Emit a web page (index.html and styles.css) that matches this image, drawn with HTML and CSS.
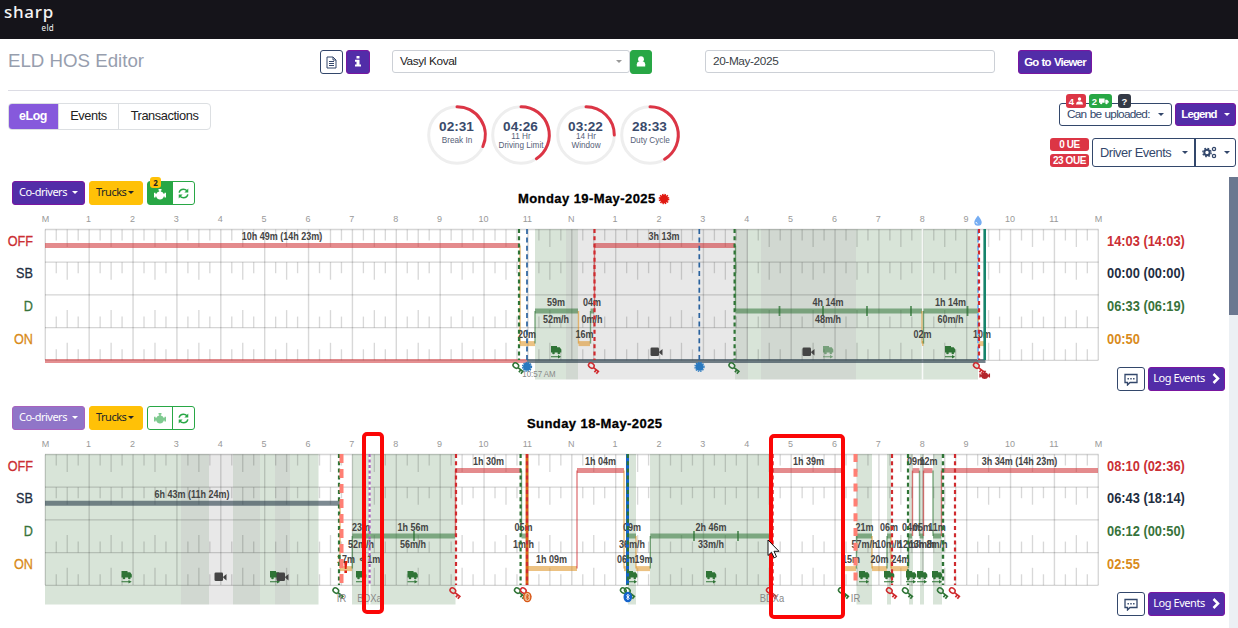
FILE: index.html
```html
<!DOCTYPE html>
<html lang="en">
<head>
<meta charset="utf-8">
<title>ELD HOS Editor</title>
<link rel="stylesheet" href="styles.css">
</head>
<body>
<svg class="defs" width="0" height="0">
  <symbol id="engine" viewBox="0 0 12 11"><path d="M4.500 0h3v1.500H6.800v.9Q9 2.600 9.600 4.800h.9V3.800h1.500v4.700h-1.500V7.500h-.7Q9 10.500 6 10.500T2.200 7.500h-.7v1H0V3.800h1.500v1h.9Q3 2.600 5.200 2.400v-.9h-.7z"/></symbol>
  <symbol id="refresh" viewBox="0 0 12 12"><path d="M1.300 5C1.800 2.600 3.700 1.300 6 1.300c1.500 0 2.800.6 3.700 1.600M10.700 7c-.5 2.400-2.400 3.700-4.700 3.700-1.500 0-2.800-.6-3.700-1.600" fill="none" stroke="currentColor" stroke-width="1.700"/><path d="M11.200.6v4.200H7zM.8 11.400V7.200H5z"/></symbol>
  <symbol id="chat" viewBox="0 0 14 13"><path d="M1 1.500h12v8H6L3.500 12V9.500H1z" fill="none" stroke="currentColor" stroke-width="1.300"/><path d="M3.500 5h1.400v1.400H3.500zM6.300 5h1.400v1.400H6.300zM9.100 5h1.400v1.400H9.100z"/></symbol>
  <symbol id="chevron" viewBox="0 0 8 11"><path d="M1.500 1l4.500 4.500L1.500 10" fill="none" stroke="currentColor" stroke-width="2.500"/></symbol>
  <symbol id="van" viewBox="0 0 16 10"><path d="M0 0h9v7H0zM10 2h3l2.500 2.500V7H10z"/><circle cx="3.500" cy="7.700" r="1.800"/><circle cx="12" cy="7.700" r="1.800"/></symbol>
</svg>

<header class="topbar"><div class="brand">sharp<span>eld</span></div></header>

<section class="filters">
  <h1>ELD HOS Editor</h1>
  <div class="doc-actions">
    <button class="btn outline doc"><svg width="11" height="13" viewBox="0 0 11 13"><path d="M1 1h6l3 3v8H1zM7 1v3h3M3 5.500h5M3 7.500h5M3 9.500h5" fill="none" stroke="currentColor"/></svg></button>
    <button class="btn primary info"><svg width="8" height="11" viewBox="0 0 8 11"><path d="M2.500 0h3v2.500h-3zM1 3.800h4.500v4.700H7v2H1v-2h1.500V5.800H1z" fill="#fff"/></svg></button>
  </div>
  <div class="driver">
    <div class="field">Vasyl Koval<i class="caret"></i></div>
    <button class="btn success user"><svg width="10" height="12" viewBox="0 0 10 12"><circle cx="5" cy="3.200" r="2.900" fill="#fff"/><path d="M.8 10.500V8.300Q1 5.500 3 5.500h4q2 0 2.200 2.800v2.200z" fill="#fff"/></svg></button>
  </div>
  <div class="field date">20-May-2025</div>
  <button class="btn primary viewer">Go to Viewer</button>
</section>

<section class="summary">
  <nav class="tabs"><a class="active">eLog</a><a>Events</a><a>Transactions</a></nav>
  <svg class="gauges" id="gauges" width="260" height="64" viewBox="425 103 260 64"></svg>
  <div class="actions">
    <div class="line">
      <div class="upload">Can be uploaded:<i class="caret"></i>
        <div class="badges"><b class="red">4 <svg width="7" height="8" viewBox="0 0 7 8"><circle cx="3.500" cy="2" r="1.700"/><path d="M0 7.500Q.3 4.500 2 4.500h3q1.700 0 2 3z"/></svg></b><b class="green">2 <svg width="10" height="7"><use href="#van"/></svg></b><b class="dark">?</b></div>
      </div>
      <button class="btn primary legend">Legend<i class="caret"></i></button>
    </div>
    <div class="line second">
      <div class="counts"><b>0 UE</b><b>23 OUE</b></div>
      <div class="group"><span class="events">Driver Events<i class="caret"></i></span><span class="gear"><svg width="15" height="13" viewBox="0 0 15 13"><g fill="none" stroke="currentColor"><circle cx="5" cy="6.500" r="2.700" stroke-width="2"/><circle cx="5" cy="6.500" r="4.200" stroke-width="1.300" stroke-dasharray="1.700 1.600"/><circle cx="12" cy="3" r="1.600" stroke-width="1.300"/><circle cx="12" cy="10" r="1.600" stroke-width="1.300"/></g></svg><i class="caret"></i></span></div>
    </div>
  </div>
</section>

<main class="logs">
  <div class="list">
    <article class="log">
      <div class="log-head">
        <div class="tools">
          <button class="btn primary">Co-drivers<i class="caret"></i></button>
          <button class="btn warning">Trucks<i class="caret"></i></button>
          <div class="pair"><span class="engine on"><em>2</em><svg width="12" height="11"><use href="#engine"/></svg></span><span class="refresh"><svg width="11" height="11"><use href="#refresh"/></svg></span></div>
        </div>
        <h2>Monday 19-May-2025<svg width="12" height="12" viewBox="-6 -6 12 12"><circle r="4.200" fill="#e01a12"/><circle r="4.600" fill="none" stroke="#e01a12" stroke-width="1.500" stroke-dasharray="1.400 1"/></svg></h2>
      </div>
      <div class="log-body">
        <div class="rows"><span class="off">OFF</span><span class="sb">SB</span><span class="d">D</span><span class="on">ON</span></div>
        <svg class="chart" id="monday" width="1065" height="172" viewBox="40 212 1065 172"></svg>
        <div class="side">
          <div class="totals"><span class="off">14:03 (14:03)</span><span class="sb">00:00 (00:00)</span><span class="d">06:33 (06:19)</span><span class="on">00:50</span></div>
          <div class="side-actions"><button class="btn outline chat"><svg width="14" height="13"><use href="#chat"/></svg></button><button class="btn primary more">Log Events<svg width="8" height="11"><use href="#chevron"/></svg></button></div>
        </div>
      </div>
    </article>
    <article class="log">
      <div class="log-head">
        <div class="tools">
          <button class="btn primary faded">Co-drivers<i class="caret"></i></button>
          <button class="btn warning">Trucks<i class="caret"></i></button>
          <div class="pair"><span class="engine"><svg width="12" height="11"><use href="#engine"/></svg></span><span class="refresh"><svg width="11" height="11"><use href="#refresh"/></svg></span></div>
        </div>
        <h2>Sunday 18-May-2025</h2>
      </div>
      <div class="log-body">
        <div class="rows"><span class="off">OFF</span><span class="sb">SB</span><span class="d">D</span><span class="on">ON</span></div>
        <svg class="chart" id="sunday" width="1065" height="172" viewBox="40 212 1065 172"></svg>
        <div class="side">
          <div class="totals"><span class="off">08:10 (02:36)</span><span class="sb">06:43 (18:14)</span><span class="d">06:12 (00:50)</span><span class="on">02:55</span></div>
          <div class="side-actions"><button class="btn outline chat"><svg width="14" height="13"><use href="#chat"/></svg></button><button class="btn primary more">Log Events<svg width="8" height="11"><use href="#chevron"/></svg></button></div>
        </div>
      </div>
    </article>
  </div>
  <div class="scrollbar"><div class="thumb"></div></div>
</main>

<div class="mark mark-a"></div>
<div class="mark mark-b"></div>
<svg class="pointer" width="13" height="20" viewBox="0 0 13 20"><path d="M1 1v15.500l3.500-3.300 2.600 5.600 2.400-1.100-2.500-5.400H12z" fill="#fff" stroke="#111"/></svg>
<script src="chart.js"></script>
</body>
</html>
```
FILE: styles.css
```css
* { box-sizing: border-box; }
body { margin: 0; width: 1238px; height: 628px; overflow: hidden; background: #fff; color: #222; font-family: "Liberation Sans", Arial, sans-serif; position: relative; }
button { font: inherit; margin: 0; }
.defs { display: block; }
svg { display: block; }
symbol, use { fill: currentColor; }

.topbar { height: 39px; background: #15141a; padding: 3px 0 0 4px; }
.brand { width: 51px; color: #f4f4f4; font: 500 17px/17px "Noto Sans", sans-serif; letter-spacing: .7px; }
.brand span { display: block; font-size: 8px; line-height: 8px; text-align: right; letter-spacing: .3px; font-weight: 400; margin-top: 4px; padding-right: 1px; }

.caret { display: inline-block; border: 3px solid transparent; border-top-color: currentColor; border-bottom: 0; margin-left: 7px; flex: none; }
.btn { display: flex; align-items: center; justify-content: center; height: 24px; border: 1px solid; border-radius: 3px; padding: 0; white-space: nowrap; }
.primary { background: #522da8; border-color: #7a16a0; color: #fff; }
.outline { background: #fff; border-color: #33476b; color: #33476b; }
.success { background: #28a745; border-color: #28a745; }
.warning { background: #ffc107; border-color: #ffc107; color: #212529; }

.filters { height: 52px; margin-left: 8px; border-bottom: 1px solid #dcdce4; display: flex; align-items: flex-start; padding-top: 11px; }
h1 { margin: 0; width: 312px; font-weight: 400; font-size: 18.700px; line-height: 21px; color: #979eae; }
.doc-actions { display: flex; gap: 3px; width: 72px; }
.doc { width: 23px; }
.info { width: 24px; padding-bottom: 2px; }
.driver { display: flex; width: 313px; }
.field { height: 23px; border: 1px solid #ccd0d6; border-radius: 3px; font-size: 11.800px; line-height: 21px; padding: 0 7px; color: #3a3f47; letter-spacing: -.38px; }
.driver .field { width: 238px; display: flex; justify-content: space-between; align-items: center; color: #222; }
.driver .caret { color: #999; }
.user { width: 22px; padding-bottom: 1px; }
.date { width: 290px; margin-right: 23px; }
.viewer { width: 74px; font-size: 11.400px; font-weight: bold; letter-spacing: -.78px; word-spacing: .8px; padding-bottom: 1px; }

.summary { height: 86px; padding: 12px 2px 0 8px; display: flex; }
.tabs { display: flex; height: 27px; width: 203px; border: 1px solid #dcdfe2; border-radius: 4px; overflow: hidden; font-size: 12.800px; line-height: 24px; letter-spacing: -.42px; }
.tabs a { flex: none; text-align: center; width: 60px; border-right: 1px solid #dcdfe2; }
.tabs .active { width: 51px; background: #8659dc; color: #fff; font-weight: bold; font-size: 12.400px; margin: -1px 0 0 -1px; height: 27px; line-height: 26px; }
.tabs a:last-child { flex: 1; border: 0; }
.gauges { margin-left: 214px; }
.gauges .time { font: bold 13.600px "Liberation Sans", sans-serif; fill: #394a6b; }
.gauges .name { font: 8.200px "Liberation Sans", sans-serif; fill: #566178; }
.actions { width: 190px; margin-left: auto; }
.line { display: flex; justify-content: flex-end; gap: 3px; color: #33476b; }
.upload { position: relative; width: 113px; height: 23px; border: 1px solid #33476b; border-radius: 3px; font-size: 11.800px; line-height: 21px; padding: 0 7px; display: flex; align-items: center; justify-content: space-between; letter-spacing: -.74px; word-spacing: .7px; white-space: nowrap; }
.upload .caret { margin: 0; }
.badges { position: absolute; left: 6px; top: -10px; display: flex; gap: 3px; }
.badges b { display: flex; gap: 2px; align-items: center; justify-content: center; height: 14px; border-radius: 3px; color: #fff; fill: #fff; font-size: 9.500px; letter-spacing: 0; }
.red { background: #dc3545; width: 20px; }
.green { background: #28a745; width: 23px; }
.dark { background: #343a46; width: 13px; margin-left: 3px; }
.legend { width: 61px; height: 23px; font-size: 11.400px; font-weight: bold; letter-spacing: -.85px; padding-bottom: 1px; }
.second { margin-top: 12px; }
.counts { display: flex; flex-direction: column; gap: 3px; }
.counts b { display: block; width: 39px; height: 13px; line-height: 14px; text-align: center; background: #dc3545; color: #fff; border-radius: 3px; font-size: 10px; letter-spacing: -.4px; }
.group { display: flex; width: 144px; height: 29px; border: 1px solid #33476b; border-radius: 3px; font-size: 12.800px; line-height: 27px; letter-spacing: -.42px; }
.group span { display: flex; align-items: center; justify-content: center; white-space: nowrap; }
.group .events { flex: 1; border-right: 2px solid #33476b; justify-content: space-between; padding: 0 6px 0 7px; }
.gear { width: 39px; }

.logs { display: flex; height: 451px; }
.list { width: 1229px; flex: none; }
.scrollbar { flex: 1; background: #ecf0f4; }
.thumb { height: 138px; background: #6b7890; }
.log { height: 225px; padding-top: 4px; }
.log-head { display: flex; align-items: flex-start; height: 31px; padding-left: 12px; }
.tools { width: 506px; display: flex; gap: 4px; font: 11px/20px "Noto Sans", sans-serif; }
.log:nth-child(2) .tools { width: 515px; }
.tools .btn { justify-content: space-between; padding: 0 6px 2px; letter-spacing: -.5px; }
.tools .caret { margin-left: 0; }
.tools .primary { width: 73px; }
.tools .warning { width: 54px; padding-right: 8px; }
.btn.faded { background: #9075c8; border-color: #a862bd; }
.pair { display: flex; width: 48px; height: 24px; border: 1px solid #28a745; border-radius: 3px; color: #28a745; }
.pair span { display: flex; align-items: center; justify-content: center; flex: none; width: 21px; position: relative; }
.pair .engine { width: 25px; border-right: 1px solid #28a745; color: #7fca90; }
.pair .engine.on { background: #28a745; color: #fff; padding-top: 3px; }
.engine em { position: absolute; left: 2px; top: -5px; width: 11px; height: 11px; border-radius: 3px; background: #ffc107; color: #222; font: bold 8px/11px "Noto Sans", sans-serif; text-align: center; }
h2 { display: flex; align-items: center; gap: 2px; margin: 10px 0 0; font-size: 13px; line-height: 16px; color: #000; letter-spacing: .42px; white-space: nowrap; -webkit-text-stroke: .3px #000; }
.log-body { display: flex; }
.rows { width: 40px; padding: 12.500px 7px 0 0; text-align: right; font-size: 14.400px; -webkit-text-stroke: .3px; }
.rows span, .totals span { display: block; height: 32.750px; line-height: 33px; }
.rows span { transform: scaleX(.88); transform-origin: right; }
.off { color: #cb2f34; }
.sb { color: #1f2e42; }
.d { color: #38733b; }
.on { color: #d98b1b; }
.chart { flex: none; }
.side { padding: 12.500px 0 0 2px; }
.totals { font-size: 14.200px; font-weight: bold; width: 86px; white-space: nowrap; }
.totals span { transform: scaleX(.905); transform-origin: left; }
.side-actions { display: flex; gap: 3px; margin: 11.500px 0 0 10px; }
.chat { width: 28px; }
.more { width: 77px; gap: 7px; font: 11px/20px "Noto Sans", sans-serif; letter-spacing: -.45px; padding-bottom: 2px; }

.chart text { transform-box: fill-box; transform-origin: center; }
.chart .hour { font: 9px "Liberation Sans", sans-serif; fill: #999; }
.chart .dur { font: bold 10px "Liberation Sans", sans-serif; fill: #444; transform: scaleX(.9); }
.chart .note { font: 10px "Liberation Sans", sans-serif; fill: #888; transform: scaleX(.94); }
.chart .stamp { font: 9px "Liberation Sans", sans-serif; fill: #888; transform: scaleX(.88); }

.mark { position: absolute; border: 4px solid #fb0606; border-radius: 5px; }
.mark-a { left: 362px; top: 432px; width: 22px; height: 182px; }
.mark-b { left: 769px; top: 434px; width: 76px; height: 185px; }
.pointer { position: absolute; left: 767px; top: 539px; }
```
FILE: chart.js
```js
const RED = '#cf2a2e', GREEN = '#2f7436', ORANGE = '#dd8f1c', SLATE = '#2f4350';
const LEVEL = { off: 245.6, sb: 278.3, d: 311, on: 343.6 };
const INK = { off: RED, sb: SLATE, d: '#2f7436', on: ORANGE };
const TEXT_Y = { off: 240, sb: 273, d: 306, speed: 323, on: 338, note: 377.5, stamp: 377 };

const line = (x1, y1, x2, y2, color, w, extra = '') =>
  `<line x1="${x1}" y1="${y1}" x2="${x2}" y2="${y2}" stroke="${color}" stroke-width="${w}" ${extra}/>`;

function grid() {
  const step = 1053 / 24, h = 32.7, top = 229.5;
  let s = '';
  for (let r = 0; r <= 4; r++) s += line(45, top + r * h, 1098.5, top + r * h, '#000', 1.3, 'opacity=".16"');
  for (let q = 0; q <= 96; q++) {
    const x = 45.3 + q * step / 4;
    if (q % 4 === 0) { s += line(x, top, x, 360, '#000', 1.4, 'opacity=".15"'); continue; }
    const len = q % 2 ? 11 : 17.5;
    for (let r = 0; r < 4; r++) {
      const y = r < 2 ? top + r * h : top + (r + 1) * h;
      s += line(x, y, x, r < 2 ? y + len : y - len, '#000', 1.3, 'opacity=".15"');
    }
  }
  for (let i = 0; i <= 24; i++) {
    const t = i % 24 === 0 ? 'M' : i === 12 ? 'N' : i % 12;
    s += `<text class="hour" text-anchor="middle" x="${(45.5 + i * step - (i % 24 ? .8 : 0)).toFixed(1)}" y="222">${t}</text>`;
  }
  return s;
}

const icons = {
  truck: (x, o = 1) => `<g transform="translate(${x - 5} 346)" fill="${GREEN}" opacity="${o}"><path d="M0 0h6v6.500H0zM6 1.200h2.700L10.300 3.500v3H6z"/><circle cx="2.500" cy="7" r="1.300"/><circle cx="7.800" cy="7" r="1.300"/><path d="M0 10.200h7V9l3.200 1.700L7 12.400v-1.200H0z"/></g>`,
  camera: x => `<g transform="translate(${x - 6} 347.500)" fill="#444"><rect width="8.500" height="8.500" rx="1.300"/><path d="M8.700 4.200L12 1.500v6.400L8.700 5.200z"/></g>`,
  key: (x, c) => `<g transform="translate(${x} 367) rotate(38)" fill="none" stroke="${c}"><ellipse cx="-3" cy=".5" rx="3" ry="2.400" stroke-width="1.500"/><path d="M0 .8H7M3.500 1v2.800M6 1v2.800" stroke-width="1.700"/></g>`,
  burst: x => `<g transform="translate(${x} 366.800)"><circle r="4" fill="#2a79bf"/><circle r="4.500" fill="none" stroke="#2a79bf" stroke-width="1.300" stroke-dasharray="1.400 1"/></g>`,
  ring: (x, c, b) => `<g transform="translate(${x} 372)"><ellipse rx="3.600" ry="4.600" fill="${b}" stroke="${c}" stroke-width="1.400"/><path d="M-1.500-1.500L1.500 1.300 0 2.800v-5.600L1.500-1.300-1.500 1.500" fill="none" stroke="${c === '#1463cc' ? '#fff' : c}" stroke-width=".9"/></g>`,
  engine: x => `<svg x="${x - 5.500}" y="370.500" width="11" height="9" viewBox="0 0 12 11" preserveAspectRatio="none" color="#b3262c"><use href="#engine" width="12" height="11"/></svg>`,
  drop: x => `<path d="M${x} 215.500q3.700 4.600 3.700 6.700a3.700 3.500 0 0 1-7.400 0q0-2.100 3.700-6.700z" fill="#76adf2"/><path d="M${x - 2} 222q.3 1.500 1.500 1.700" stroke="#fff" fill="none"/>`,
  alert: x => `<path d="M${x - 1.700} 336h3.400l-.8 8h-1.800zM${x - 1.300} 345.500h2.600v2.500h-2.600z" fill="#df2013"/>`
};

function draw(id, c) {
  let s = c.shade.map(([a, b, k]) => `<rect x="${a}" y="229" width="${b - a}" height="150.500" fill="${k === 'g' ? '#d8e4d8' : k === 'm' ? '#d1d8d1' : '#e8e8e8'}"/>`).join('');
  s += grid();
  (c.gaps || []).forEach(x => { s += line(x, 229, x, 379.5, '#fff', 1.6, 'opacity=".85"'); });
  c.path.forEach(([lv, a, b], i) => {
    if (i) {
      const prev = c.path[i - 1][0];
      s += line(a, LEVEL[prev], a, LEVEL[lv], INK[lv], 1.4, 'opacity=".6"');
    }
    s += line(a, LEVEL[lv], b, LEVEL[lv], INK[lv], 5, `opacity="${lv === 'sb' ? .62 : .54}"`);
  });
  c.nubs.forEach(x => { s += line(x, 306, x, 316, GREEN, 1.8, 'opacity=".75"'); });
  (c.base || []).forEach(([a, b, k]) => { s += line(a, 361, b, 361, k, 4, `opacity="${k === RED ? .52 : .65}"`); });
  c.icons.forEach(([n, ...a]) => { s += icons[n](...a); });
  c.text.forEach(([t, x, row]) => {
    const cls = row === 'note' || row === 'stamp' ? row : 'dur';
    s += `<text class="${cls}" text-anchor="middle" x="${x}" y="${TEXT_Y[row]}">${t.replace('<', '&lt;')}</text>`;
  });
  c.events.forEach(([x, k, w, dash]) => { s += line(x, 229, x, 360, k, w, dash ? `stroke-dasharray="${dash}"` : ''); });
  document.getElementById(id).innerHTML = s;
}

const DOT = '4 3.2', BLUE = '#2a629e';
draw('monday', {
  shade: [[535, 566, 'g'], [566, 578, 'm'], [578, 735, 'n'], [735, 748, 'm'], [748, 761, 'g'], [761, 856, 'm'], [856, 978, 'g']],
  gaps: [922.5],
  path: [['off', 45, 519.5], ['on', 520, 535], ['d', 535, 578], ['on', 578.5, 590], ['d', 590.5, 594], ['off', 594.5, 735], ['d', 735.5, 922], ['on', 922, 923.5], ['d', 923.5, 978], ['on', 978.5, 985]],
  nubs: [779.5, 823, 867, 911, 967.5],
  base: [[45, 527, RED], [527, 985.5, SLATE]],
  icons: [['truck', 556], ['truck', 828, .55], ['truck', 950], ['camera', 656.5], ['camera', 808.5], ['key', 518.5, GREEN], ['key', 594, RED], ['key', 734.5, GREEN], ['key', 979, RED], ['burst', 527], ['burst', 699.5], ['engine', 984.7], ['drop', 978]],
  text: [['10h 49m (14h 23m)', 282, 'off'], ['3h 13m', 664, 'off'], ['59m', 556, 'd'], ['52m/h', 556, 'speed'], ['20m', 527, 'on'], ['04m', 592, 'd'], ['0m/h', 592, 'speed'], ['16m', 584.5, 'on'], ['4h 14m', 828, 'd'], ['48m/h', 828, 'speed'], ['1h 14m', 950.5, 'd'], ['60m/h', 950.5, 'speed'], ['02m', 922.5, 'on'], ['10m', 982, 'on'], ['10:57 AM', 539, 'stamp']],
  events: [[519, GREEN, 2.2, DOT], [527, BLUE, 1.7, '5 3.4'], [594.5, RED, 2.2, DOT], [699.3, BLUE, 1.7, '5 3.4'], [734.6, GREEN, 2.2, DOT], [978, '#7fb1ee', 2, '5 3.4'], [979, RED, 2.2, DOT], [984.7, '#16846b', 2.6]]
});
draw('sunday', {
  shade: [[45, 181, 'g'], [181, 209, 'm'], [209, 233, 'n'], [233, 260, 'm'], [260, 275, 'g'], [275, 290, 'm'], [290, 318.5, 'g'], [352, 455.5, 'g'], [628, 636, 'g'], [650, 771, 'g'], [856.5, 872, 'g'], [887, 891, 'g'], [909, 913, 'g'], [920, 924, 'g'], [933, 942, 'g']],
  gaps: [369.7],
  path: [['sb', 45, 340], ['on', 340, 352], ['d', 352.3, 455], ['off', 455.5, 521], ['d', 521.5, 527], ['on', 527.5, 577], ['off', 577, 624], ['on', 624, 627.5], ['d', 628, 636], ['on', 636, 650], ['d', 650.3, 771], ['off', 771.5, 844], ['on', 844, 856], ['d', 856.5, 872], ['on', 872, 887], ['d', 887, 891], ['on', 891, 908], ['d', 908.5, 912], ['off', 912.5, 919.5], ['d', 919.5, 923.5], ['off', 923.5, 932.5], ['d', 933, 941], ['off', 941.5, 1098]],
  nubs: [414, 694, 738],
  icons: [['truck', 126.5], ['truck', 275], ['truck', 361], ['truck', 412.5], ['truck', 632], ['truck', 711], ['truck', 864], ['truck', 889], ['truck', 911], ['truck', 922], ['truck', 937], ['camera', 220.5], ['camera', 282.5], ['key', 338.5, GREEN], ['key', 455.5, RED], ['key', 520, GREEN], ['key', 526, RED], ['ring', 527.3, '#d85716', '#edc19a'], ['key', 626, GREEN], ['key', 630, GREEN], ['ring', 627.8, '#1463cc', '#1463cc'], ['key', 772, RED], ['key', 844, GREEN], ['key', 892, RED], ['key', 908, GREEN], ['key', 943, GREEN], ['key', 955, RED], ['alert', 345.7]],
  text: [['6h 43m (11h 24m)', 192, 'sb'], ['23m', 361, 'd'], ['52m/h', 361, 'speed'], ['17m', 346, 'on'], ['< 1m', 370, 'on'], ['1h 56m', 413, 'd'], ['56m/h', 413, 'speed'], ['1h 30m', 488.5, 'off'], ['05m', 523.5, 'd'], ['1m/h', 523.5, 'speed'], ['1h 09m', 551.5, 'on'], ['1h 04m', 600.5, 'off'], ['09m', 632, 'd'], ['36m/h', 632, 'speed'], ['06m', 626, 'on'], ['19m', 643.5, 'on'], ['2h 46m', 711, 'd'], ['33m/h', 711, 'speed'], ['1h 39m', 808.5, 'off'], ['21m', 864.5, 'd'], ['57m/h', 864.5, 'speed'], ['15m', 851, 'on'], ['20m', 879.5, 'on'], ['24m', 900.5, 'on'], ['06m', 889, 'd'], ['10m/h', 889, 'speed'], ['04m', 911, 'd'], ['12m/h', 911, 'speed'], ['09m', 916, 'off'], ['12m', 928.5, 'off'], ['05m', 922, 'd'], ['13m/h', 922, 'speed'], ['11m', 937, 'd'], ['8m/h', 937, 'speed'], ['3h 34m (14h 23m)', 1019.5, 'off'], ['IR', 341.5, 'note'], ['BDXa', 369.5, 'note'], ['BDXa', 772, 'note'], ['IR', 855.5, 'note']],
  events: [[339, GREEN, 2.2, DOT], [341.5, '#ff7f74', 4, '9 6'], [369.6, '#a765b8', 2.2, '3 2.5'], [456, RED, 2.2, DOT], [520.6, GREEN, 2.2, DOT], [527, '#d96613', 2.8], [527, RED, 2.2, DOT], [627.5, '#1463cc', 3], [627.8, GREEN, 2.2, DOT], [772.7, RED, 2, DOT], [844, GREEN, 2, DOT], [855.5, '#ff7f74', 4, '8 6.8'], [892, RED, 2.2, DOT], [908, GREEN, 2.2, DOT], [943, GREEN, 2.4, DOT], [955, RED, 2.2, DOT]]
});

document.getElementById('gauges').innerHTML = [
  [457, 114, '02:31', ['Break In']], [521, 147, '04:26', ['11 Hr', 'Driving Limit']],
  [586, 90, '03:22', ['14 Hr', 'Window']], [650, 149, '28:33', ['Duty Cycle']]
].map(([x, deg, time, names]) => {
  const a = deg * Math.PI / 180, r = 28.3;
  return `<circle cx="${x}" cy="135" r="${r}" fill="none" stroke="#eee" stroke-width="3"/>` +
    `<path d="M${x} ${135 - r}A${r} ${r} 0 0 1 ${x + r * Math.sin(a)} ${135 - r * Math.cos(a)}" fill="none" stroke="#dc3545" stroke-width="3" stroke-linecap="round"/>` +
    `<text class="time" text-anchor="middle" x="${x - .5}" y="131">${time}</text>` +
    names.map((n, i) => `<text class="name" text-anchor="middle" x="${x}" y="${names.length === 1 ? 143 : 139 + i * 9}">${n}</text>`).join('');
}).join('');
```
